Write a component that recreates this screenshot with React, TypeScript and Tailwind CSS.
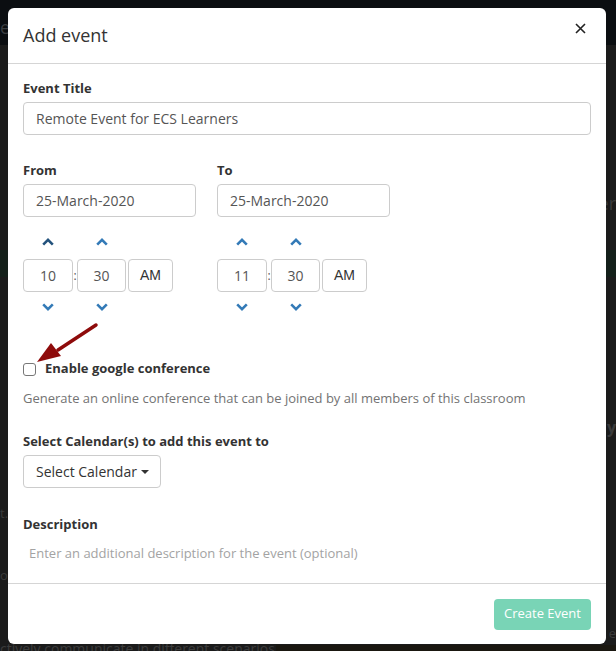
import React from 'react';

const font = { fontFamily: '"Open Sans", "Liberation Sans", sans-serif' };

function ChevronUp({ dark }: { dark?: boolean }) {
  return (
    <svg width="12" height="8" viewBox="0 0 12 8" className={dark ? 'text-[#23527c]' : 'text-[#337ab7]'}>
      <path d="M1.2 6.6 L6 1.9 L10.8 6.6" fill="none" stroke="currentColor" strokeWidth="2.6" strokeLinejoin="miter" />
    </svg>
  );
}

function ChevronDown() {
  return (
    <svg width="12" height="8" viewBox="0 0 12 8" className="text-[#337ab7]">
      <path d="M1.2 1.4 L6 6.1 L10.8 1.4" fill="none" stroke="currentColor" strokeWidth="2.6" strokeLinejoin="miter" />
    </svg>
  );
}

function TimePicker({ hour, darkFirst }: { hour: string; darkFirst?: boolean }) {
  return (
    <div className="flex flex-col">
      <div className="mt-[8px] flex h-[34px] items-center">
        <div className="flex w-[50px] justify-center"><ChevronUp dark={darkFirst} /></div>
        <div className="w-[4px]" />
        <div className="flex w-[49px] justify-center"><ChevronUp /></div>
      </div>
      <div className="flex h-[33px] items-stretch text-[14px] text-[#555]">
        <div className="flex w-[50px] items-center justify-center rounded-[4px] border border-[#ccc]">{hour}</div>
        <div className="flex w-[4px] items-center justify-center text-[12px]">:</div>
        <div className="flex w-[49px] items-center justify-center rounded-[4px] border border-[#ccc]">30</div>
        <div
          className="ml-[2px] flex w-[45px] items-center justify-center rounded-[4px] border border-[#ccc] text-[14px] text-[#333]"
          style={{ fontFamily: '"Liberation Sans", Arial, sans-serif' }}
        >
          AM
        </div>
      </div>
      <div className="flex h-[30px] items-center">
        <div className="flex w-[50px] justify-center"><ChevronDown /></div>
        <div className="w-[4px]" />
        <div className="flex w-[49px] justify-center"><ChevronDown /></div>
      </div>
    </div>
  );
}

export default function App() {
  return (
    <div className="relative h-[651px] w-[616px] overflow-hidden bg-[#1b1b1b]" style={font}>
      {/* page behind the overlay */}
      <div className="absolute inset-x-0 top-0 h-[45px] bg-[#0b0e11]" />
      <div className="absolute left-0 top-[14px] text-[18px] text-[#3a3d40]">ea</div>
      <div className="absolute right-0 top-[190px] text-[18px] text-[#3a3a3a]">er</div>
      <div className="absolute inset-x-0 top-[250px] h-[27px] bg-[#14201a]" />
      <div className="absolute right-0 top-[415px] text-[16px] font-bold text-[#3a3a3a]">y</div>
      <div className="absolute left-0 top-[504px] text-[13px] text-[#3a3a3a]">t.</div>
      <div className="absolute left-0 top-[566px] text-[13px] text-[#3a3a3a]">on</div>
      <div className="absolute right-0 top-[624px] text-[13px] text-[#3a3a3a]">e</div>
      <div className="absolute left-0 top-[638px] text-[14px] text-[#3c3c3c]">ctively communicate in different scenarios</div>
      <div className="absolute bottom-0 right-0 h-[6px] w-[340px] bg-[#1a1710]" />

      {/* modal */}
      <div className="absolute left-[8px] top-[8px] flex h-[636px] w-[598px] flex-col rounded-[6px] bg-white">
        <div className="flex h-[56px] items-center justify-between border-b border-[#d5d5d5] pl-[15px] pr-[20px]">
          <span className="text-[18px] text-[#333]">Add event</span>
          <svg width="11" height="11" viewBox="0 0 11 11" className="mb-[15px]" aria-label="Close">
            <path d="M1 1 L10 10 M10 1 L1 10" stroke="#222" strokeWidth="1.6" />
          </svg>
        </div>

        <div className="relative flex flex-col px-[15px] pt-[15px]">
          <label className="h-[18px] text-[13px] font-bold leading-[18px] text-[#333]">Event Title</label>
          <div className="mt-[5px] flex h-[33px] items-center rounded-[4px] border border-[#ccc] px-[12px] text-[14px] text-[#555]">
            Remote Event for ECS Learners
          </div>

          <div className="mt-[26px] flex gap-[21px]">
            <div className="flex flex-col">
              <label className="h-[18px] text-[13px] font-bold leading-[18px] text-[#333]">From</label>
              <div className="mt-[5px] flex h-[33px] w-[173px] items-center rounded-[4px] border border-[#ccc] px-[12px] text-[14px] text-[#555]">
                25-March-2020
              </div>
              <TimePicker hour="10" darkFirst />
            </div>
            <div className="flex flex-col">
              <label className="h-[18px] text-[13px] font-bold leading-[18px] text-[#333]">To</label>
              <div className="mt-[5px] flex h-[33px] w-[173px] items-center rounded-[4px] border border-[#ccc] px-[12px] text-[14px] text-[#555]">
                25-March-2020
              </div>
              <TimePicker hour="11" />
            </div>
          </div>

          <div className="mt-[38px] flex h-[18px] items-center">
            <span className="h-[13px] w-[13px] rounded-[3px] border border-[#777] bg-white" />
            <span className="ml-[9px] text-[13px] font-bold text-[#333]">Enable google conference</span>
          </div>
          <p className="mt-[11px] text-[13px] leading-[18px] text-[#737373]">
            Generate an online conference that can be joined by all members of this classroom
          </p>

          <label className="mt-[25px] h-[18px] text-[13px] font-bold leading-[18px] text-[#333]">
            Select Calendar(s) to add this event to
          </label>
          <div className="mt-[5px] flex h-[33px] w-[138px] items-center rounded-[4px] border border-[#ccc] pl-[12px] text-[14px] text-[#333]">
            Select Calendar
            <svg width="8" height="4" viewBox="0 0 8 4" className="ml-[4px]">
              <path d="M0 0 L8 0 L4 4 Z" fill="#333" />
            </svg>
          </div>

          <label className="mt-[27px] h-[18px] text-[13px] font-bold leading-[18px] text-[#333]">Description</label>
          <p className="ml-[6px] mt-[11px] text-[13px] leading-[18px] text-[#a3a3a3]">
            Enter an additional description for the event (optional)
          </p>

          {/* annotation arrow */}
          <svg className="absolute left-[20px] top-[252px]" width="80" height="52" viewBox="0 0 80 52">
            <path d="M68 9 L30 34" stroke="#8e0b0b" strokeWidth="3.5" strokeLinecap="round" />
            <path d="M9 46 L23 27 L33 40 Z" fill="#8e0b0b" />
          </svg>
        </div>

        <div className="mt-auto flex h-[61px] items-center justify-end border-t border-[#d5d5d5] px-[15px]">
          <button className="h-[31px] w-[97px] rounded-[4px] bg-[#79d4b6] text-[13px] text-white">Create Event</button>
        </div>
      </div>
    </div>
  );
}
